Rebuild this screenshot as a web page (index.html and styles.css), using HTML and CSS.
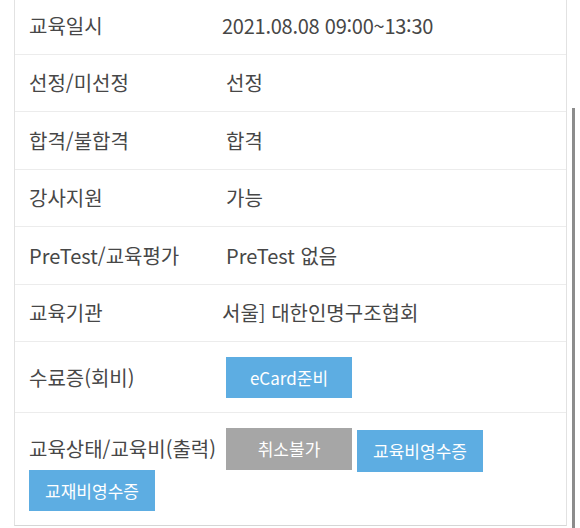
FILE: index.html
```html
<!DOCTYPE html>
<html lang="ko">
<head>
  <meta charset="UTF-8">
  <meta name="viewport" content="width=device-width, initial-scale=1.0">
  <title>교육신청 상세</title>
  <link rel="stylesheet" href="styles.css">
</head>
<body>
  <div class="detail-box">
    <div class="detail-row">
      <div class="detail-label">교육일시</div>
      <div class="detail-value date-value">2021.08.08 09:00~13:30</div>
    </div>
    <div class="detail-row">
      <div class="detail-label">선정/미선정</div>
      <div class="detail-value">선정</div>
    </div>
    <div class="detail-row">
      <div class="detail-label">합격/불합격</div>
      <div class="detail-value">합격</div>
    </div>
    <div class="detail-row">
      <div class="detail-label">강사지원</div>
      <div class="detail-value">가능</div>
    </div>
    <div class="detail-row">
      <div class="detail-label">PreTest/교육평가</div>
      <div class="detail-value">PreTest 없음</div>
    </div>
    <div class="detail-row">
      <div class="detail-label">교육기관</div>
      <div class="detail-value org-value">서울] 대한인명구조협회</div>
    </div>
    <div class="detail-row button-row">
      <div class="detail-label">수료증(회비)</div>
      <a class="btn btn-blue">eCard준비</a>
    </div>
    <div class="detail-row button-row last-row">
      <div class="detail-label">교육상태/교육비(출력)</div>
      <a class="btn btn-gray">취소불가</a>
      <a class="btn btn-blue btn-low">교육비영수증</a>
      <a class="btn btn-blue">교재비영수증</a>
    </div>
  </div>
  <div class="scroll-thumb"></div>
</body>
</html>
```

FILE: styles.css
```css
body {
  margin: 0;
  padding: 0 13px 0 14px;
  background-color: #fff;
  font-family: "Noto Sans CJK KR", "Noto Sans", sans-serif;
  color: #474747;
  overflow: hidden;
}

.detail-box {
  margin-top: -4px;
  border: 1px solid #e2e2e2;
  border-bottom-color: #d6d6d6;
}

.detail-row {
  display: flex;
  flex-wrap: wrap;
  align-items: center;
  padding: 14.5px 14px;
  border-bottom: 1px solid #ececec;
  font-size: 20px;
  line-height: 27.5px;
}

.detail-row:last-child {
  border-bottom: none;
}

.detail-label {
  flex: 0 0 197px;
}

.date-value {
  margin-left: -4px;
  letter-spacing: -0.25px;
}

.org-value {
  margin-left: -4px;
}

.button-row {
  padding: 15px 14px 14px;
}

.last-row {
  align-items: flex-start;
  column-gap: 5px;
}

.last-row .detail-label {
  flex-basis: 192px;
  padding-top: 7px;
}

.btn {
  display: flex;
  align-items: center;
  justify-content: center;
  width: 126px;
  height: 41px;
  font-size: 17px;
  color: #fff;
  cursor: pointer;
}

.btn-blue {
  background-color: #5dade2;
}

.btn-gray {
  background-color: #a6a6a6;
  height: 42px;
}

.btn-low {
  margin-top: 2px;
  height: 42px;
}

.last-row .btn:last-child {
  margin-top: -2px;
}

.scroll-thumb {
  position: absolute;
  top: 108px;
  right: 5px;
  width: 3px;
  height: 420px;
  background-color: #8c8c8c;
}
```
